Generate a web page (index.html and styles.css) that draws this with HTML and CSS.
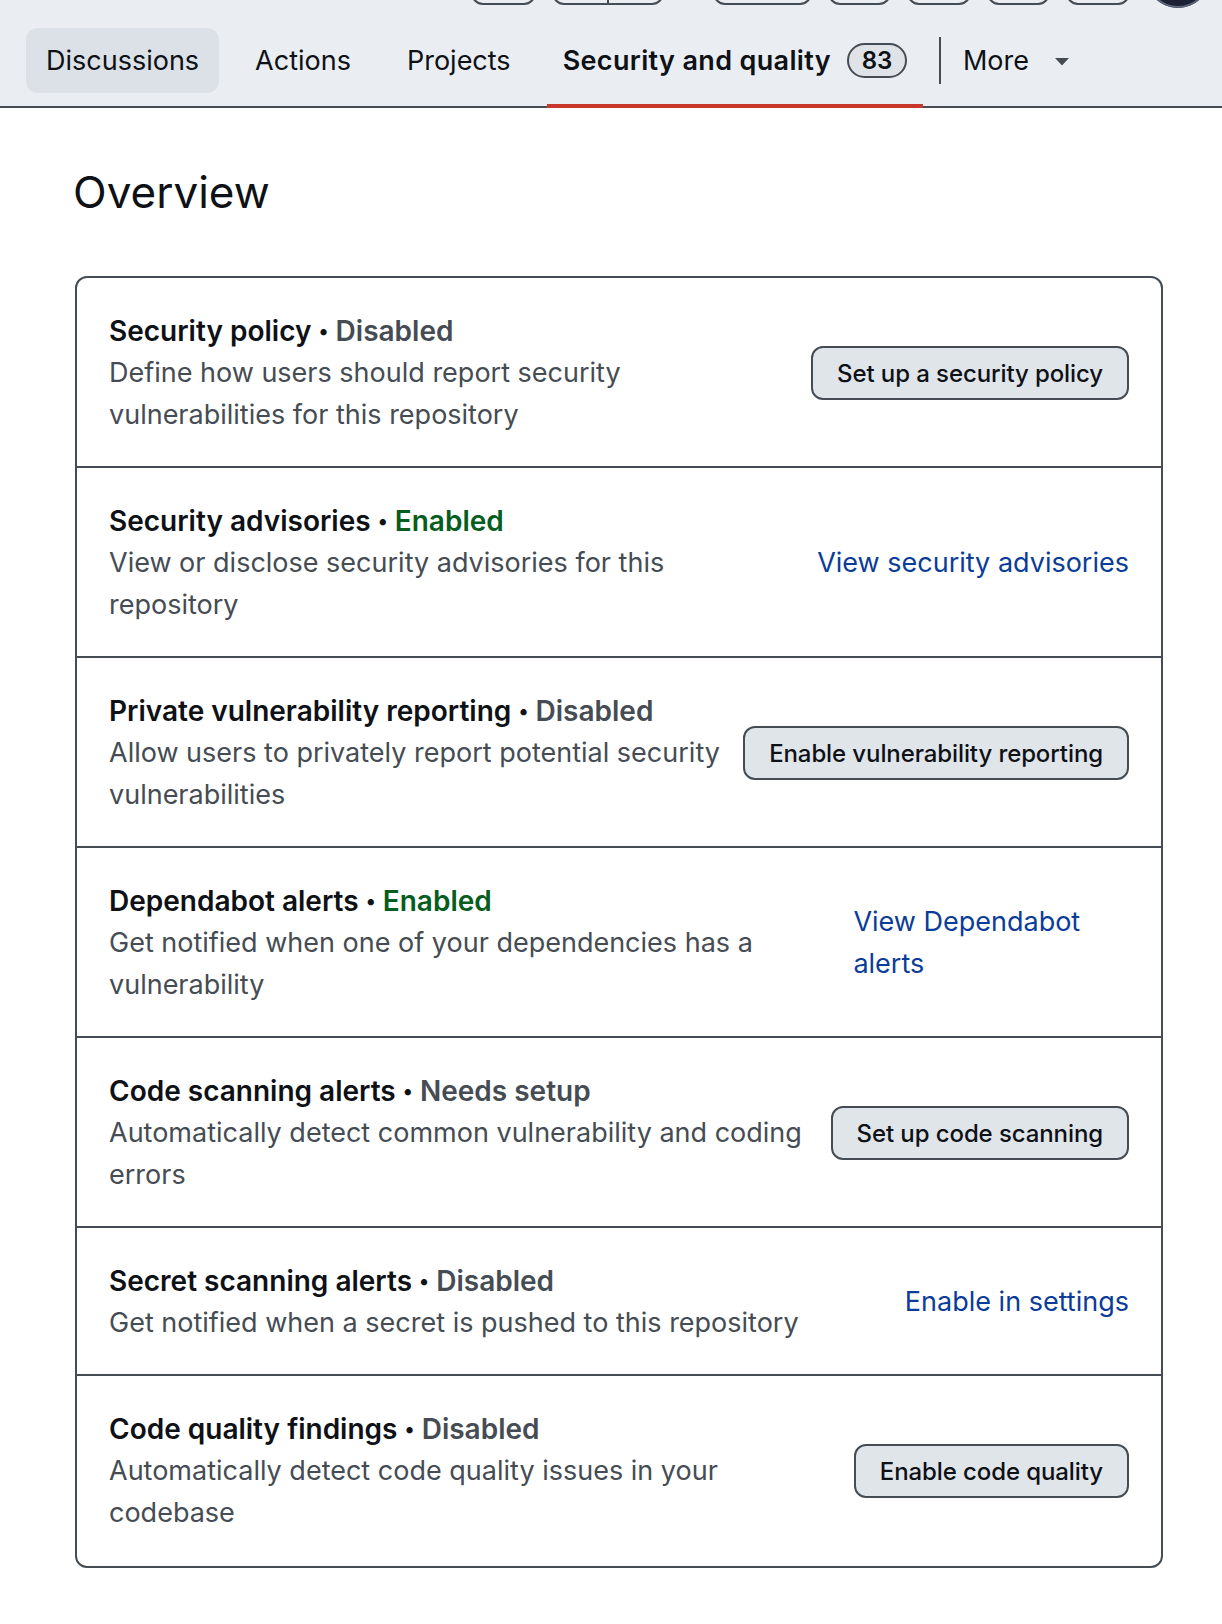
FILE: index.html
```html
<!DOCTYPE html>
<html lang="en">
<head>
    <meta charset="UTF-8">
    <meta name="viewport" content="width=device-width, initial-scale=1.0">
    <title>Security and quality · Overview</title>
    <link rel="stylesheet" href="styles.css">
</head>
<body>

<header class="repo-header">
    <div class="repo-actions">
        <span class="ghost-btn w-65"></span>
        <span class="ghost-btn w-112"><span class="split-line"></span></span>
        <span class="ghost-btn w-99 wide-gap"></span>
        <span class="ghost-btn w-63"></span>
        <span class="ghost-btn w-64"></span>
        <span class="ghost-btn w-63"></span>
        <span class="ghost-btn w-64"></span>
        <span class="avatar"></span>
    </div>
    <nav class="tabs">
        <a class="tab tab-hover" href="#">Discussions</a>
        <a class="tab" href="#">Actions</a>
        <a class="tab" href="#">Projects</a>
        <a class="tab active" href="#">Security and quality <span class="counter">83</span></a>
        <span class="tab-divider"></span>
        <a class="tab more" href="#">More
            <svg class="caret" width="14" height="8" viewBox="0 0 14 8"><path d="M0 0h14L7 7.5z" fill="#454c54"/></svg>
        </a>
    </nav>
</header>

<main class="content">
    <h2 class="page-title">Overview</h2>

    <div class="card">
        <div class="row">
            <div class="row-text">
                <div class="row-title">Security policy <span class="dot">•</span> <span class="state muted">Disabled</span></div>
                <div class="row-desc">Define how users should report security vulnerabilities for this repository</div>
            </div>
            <div class="row-action"><button class="btn">Set up a security policy</button></div>
        </div>

        <div class="row">
            <div class="row-text">
                <div class="row-title">Security advisories <span class="dot">•</span> <span class="state ok">Enabled</span></div>
                <div class="row-desc">View or disclose security advisories for this repository</div>
            </div>
            <div class="row-action"><a class="link nowrap" href="#">View security advisories</a></div>
        </div>

        <div class="row">
            <div class="row-text">
                <div class="row-title">Private vulnerability reporting <span class="dot">•</span> <span class="state muted">Disabled</span></div>
                <div class="row-desc">Allow users to privately report potential security vulnerabilities</div>
            </div>
            <div class="row-action"><button class="btn">Enable vulnerability reporting</button></div>
        </div>

        <div class="row">
            <div class="row-text">
                <div class="row-title">Dependabot alerts <span class="dot">•</span> <span class="state ok">Enabled</span></div>
                <div class="row-desc">Get notified when one of your dependencies has a vulnerability</div>
            </div>
            <div class="row-action"><a class="link" href="#">View Dependabot alerts</a></div>
        </div>

        <div class="row">
            <div class="row-text">
                <div class="row-title">Code scanning alerts <span class="dot">•</span> <span class="state muted">Needs setup</span></div>
                <div class="row-desc">Automatically detect common vulnerability and coding errors</div>
            </div>
            <div class="row-action"><button class="btn">Set up code scanning</button></div>
        </div>

        <div class="row">
            <div class="row-text">
                <div class="row-title">Secret scanning alerts <span class="dot">•</span> <span class="state muted">Disabled</span></div>
                <div class="row-desc">Get notified when a secret is pushed to this repository</div>
            </div>
            <div class="row-action"><a class="link nowrap" href="#">Enable in settings</a></div>
        </div>

        <div class="row">
            <div class="row-text">
                <div class="row-title">Code quality findings <span class="dot">•</span> <span class="state muted">Disabled</span></div>
                <div class="row-desc">Automatically detect code quality issues in your codebase</div>
            </div>
            <div class="row-action"><button class="btn">Enable code quality</button></div>
        </div>
    </div>
</main>

</body>
</html>
```

FILE: styles.css
```css
body {
    margin: 0;
    padding: 0;
    font-family: Inter, "Noto Sans", sans-serif;
    color: #0e1116;
    background-color: #fff;
}

/* header */
.repo-header {
    background-color: #eaeef2;
    border-bottom: 2px solid #454c54;
}
.repo-actions {
    display: flex;
    justify-content: flex-end;
    align-items: flex-end;
    gap: 16px;
    height: 8px;
    padding-right: 12px;
    overflow: hidden;
}
.ghost-btn {
    flex: none;
    height: 44px;
    margin-bottom: 3px;
    border: 2px solid #454c54;
    border-radius: 12px;
    box-sizing: border-box;
    display: flex;
    justify-content: center;
}
.w-65 { width: 65px; }
.w-112 { width: 112px; }
.w-99 { width: 99px; }
.w-63 { width: 63px; }
.w-64 { width: 64px; }
.wide-gap { margin-left: 33px; }
.split-line {
    width: 2px;
    background-color: #454c54;
}
.avatar {
    flex: none;
    width: 64px;
    height: 64px;
    border-radius: 50%;
    background-color: #1c2033;
    box-shadow: inset 0 0 0 2px #5b6478;
}

.tabs {
    display: flex;
    align-items: center;
    gap: 16px;
    box-sizing: border-box;
    height: 96px;
    padding: 4px 0 0 26px;
    margin-top: 2px;
}
.tab {
    position: relative;
    display: flex;
    align-items: center;
    height: 65px;
    padding: 0 20px;
    border-radius: 12px;
    font-size: 27px;
    color: #0e1116;
    text-decoration: none;
    white-space: nowrap;
}
.tab-hover {
    background-color: #dce1e7;
}
.tab.active {
    font-weight: 600;
    padding: 0 16px;
    letter-spacing: 0.35px;
}
.tab.active::after {
    content: "";
    position: absolute;
    left: 0;
    right: 0;
    bottom: -15px;
    height: 4px;
    background-color: #c9362b;
}
.counter {
    display: inline-flex;
    align-items: center;
    justify-content: center;
    box-sizing: border-box;
    min-width: 60px;
    height: 35px;
    margin-left: 16px;
    padding: 0 10px;
    border: 2px solid #454c54;
    border-radius: 20px;
    background-color: #dfe3e8;
    font-size: 24px;
    font-weight: 600;
    letter-spacing: 0;
}
.tab-divider {
    width: 2px;
    height: 47px;
    background-color: #454c54;
}
.tab.more {
    padding: 0 8px;
    margin-left: -2px;
}
.caret {
    margin-left: 26px;
    margin-top: 3px;
}

/* main */
.content {
    margin: 0 59px 0 75px;
    padding-bottom: 60px;
}
.page-title {
    font-size: 44px;
    font-weight: 400;
    line-height: 60px;
    margin: 54px 0 54px -2px;
}
.card {
    border: 2px solid #454c54;
    border-radius: 12px;
}
.row {
    display: flex;
    align-items: center;
    justify-content: space-between;
    gap: 16px;
    padding: 32px 32px 30px;
    border-top: 2px solid #454c54;
}
.row:first-child {
    border-top: none;
}
.row:last-child {
    padding-bottom: 32px;
}
.row-text {
    flex: 0 1 auto;
    font-size: 27px;
    line-height: 42px;
}
.row-title {
    font-size: 28px;
    font-weight: 600;
}
.dot {
    font-size: 20px;
    line-height: 0;
    vertical-align: 3px;
}
.state.muted {
    color: #454c54;
}
.state.ok {
    color: #055d20;
}
.row-desc {
    color: #454c54;
}
.row-action {
    flex: 0 1 auto;
}
.btn {
    height: 54px;
    padding: 0 24px;
    border: 2px solid #454c54;
    border-radius: 12px;
    background-color: #e0e5ea;
    color: #0e1116;
    font-family: inherit;
    font-size: 24px;
    font-weight: 500;
    letter-spacing: -0.1px;
    white-space: nowrap;
    cursor: pointer;
}
.link {
    font-size: 27px;
    line-height: 42px;
    color: #0b3c98;
    text-decoration: none;
}
.link.nowrap {
    white-space: nowrap;
}
```
